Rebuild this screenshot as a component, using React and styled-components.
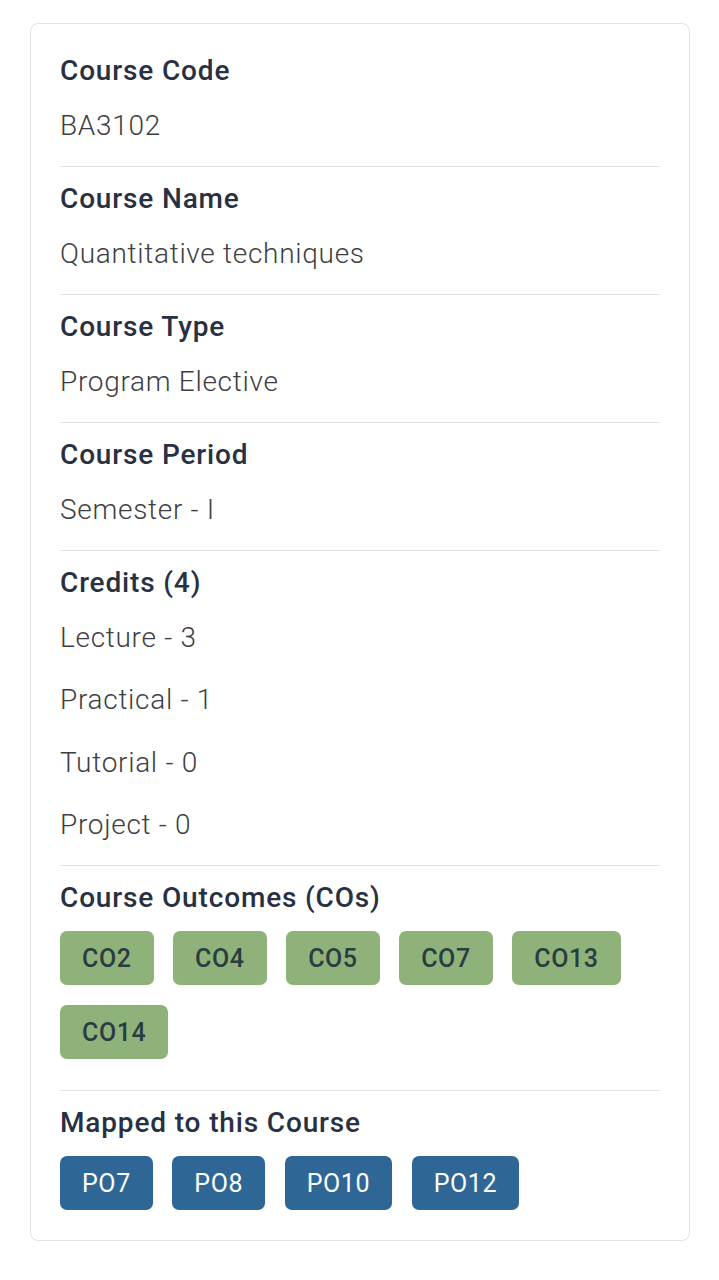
import React from "react";
import styled, { createGlobalStyle } from "styled-components";

const GlobalStyle = createGlobalStyle`
  body {
    margin: 0;
    background: #ffffff;
    font-family: Roboto, "Liberation Sans", sans-serif;
  }
`;

const Page = styled.div`
  padding: 23px 29px 40px 30px;
`;

const Card = styled.div`
  border: 1px solid #e3e3e3;
  border-radius: 8px;
  padding: 15px 29px 0 29px;
  background: #fff;
`;

const Section = styled.section`
  padding: 15px 0 ${props => (props.chips ? "31px" : "23px")};
  border-bottom: 1px solid #e2e2e2;

  &:last-child {
    border-bottom: none;
    padding-bottom: 30px;
  }
`;

const Heading = styled.h3`
  margin: 0;
  font-size: 28px;
  line-height: 34px;
  letter-spacing: 0.85px;
  font-weight: 500;
  color: #283142;
`;

const Values = styled.div`
  display: flex;
  flex-direction: column;
  gap: 28.4px;
  margin-top: 21px;
`;

const Value = styled.div`
  font-size: 28px;
  line-height: 34px;
  letter-spacing: 0.7px;
  font-weight: 300;
  color: #3e3e42;
`;

const ChipRow = styled.div`
  display: flex;
  flex-wrap: wrap;
  gap: 20px 19.5px;
  margin-top: 16px;
`;

const Chip = styled.span`
  display: inline-flex;
  align-items: center;
  justify-content: center;
  height: 54px;
  padding: 0 22px;
  border-radius: 7px;
  font-size: 25px;
  letter-spacing: 0.6px;
  font-weight: ${props => (props.variant === "po" ? 400 : 500)};
  background: ${props => (props.variant === "po" ? "#2e6795" : "#8fb27b")};
  color: ${props => (props.variant === "po" ? "#ffffff" : "#2a3d40")};
`;

const details = [
  { label: "Course Code", values: ["BA3102"] },
  { label: "Course Name", values: ["Quantitative techniques"] },
  { label: "Course Type", values: ["Program Elective"] },
  { label: "Course Period", values: ["Semester - I"] },
  {
    label: "Credits (4)",
    values: ["Lecture - 3", "Practical - 1", "Tutorial - 0", "Project - 0"],
  },
];

const outcomes = ["CO2", "CO4", "CO5", "CO7", "CO13", "CO14"];
const programOutcomes = ["PO7", "PO8", "PO10", "PO12"];

export default function App() {
  return (
    <>
      <GlobalStyle />
      <Page>
        <Card>
          {details.map(d => (
            <Section key={d.label}>
              <Heading>{d.label}</Heading>
              <Values>
                {d.values.map(v => (
                  <Value key={v}>{v}</Value>
                ))}
              </Values>
            </Section>
          ))}
          <Section chips>
            <Heading>Course Outcomes (COs)</Heading>
            <ChipRow>
              {outcomes.map(c => (
                <Chip key={c}>{c}</Chip>
              ))}
            </ChipRow>
          </Section>
          <Section chips>
            <Heading>Mapped to this Course</Heading>
            <ChipRow>
              {programOutcomes.map(p => (
                <Chip key={p} variant="po">{p}</Chip>
              ))}
            </ChipRow>
          </Section>
        </Card>
      </Page>
    </>
  );
}
